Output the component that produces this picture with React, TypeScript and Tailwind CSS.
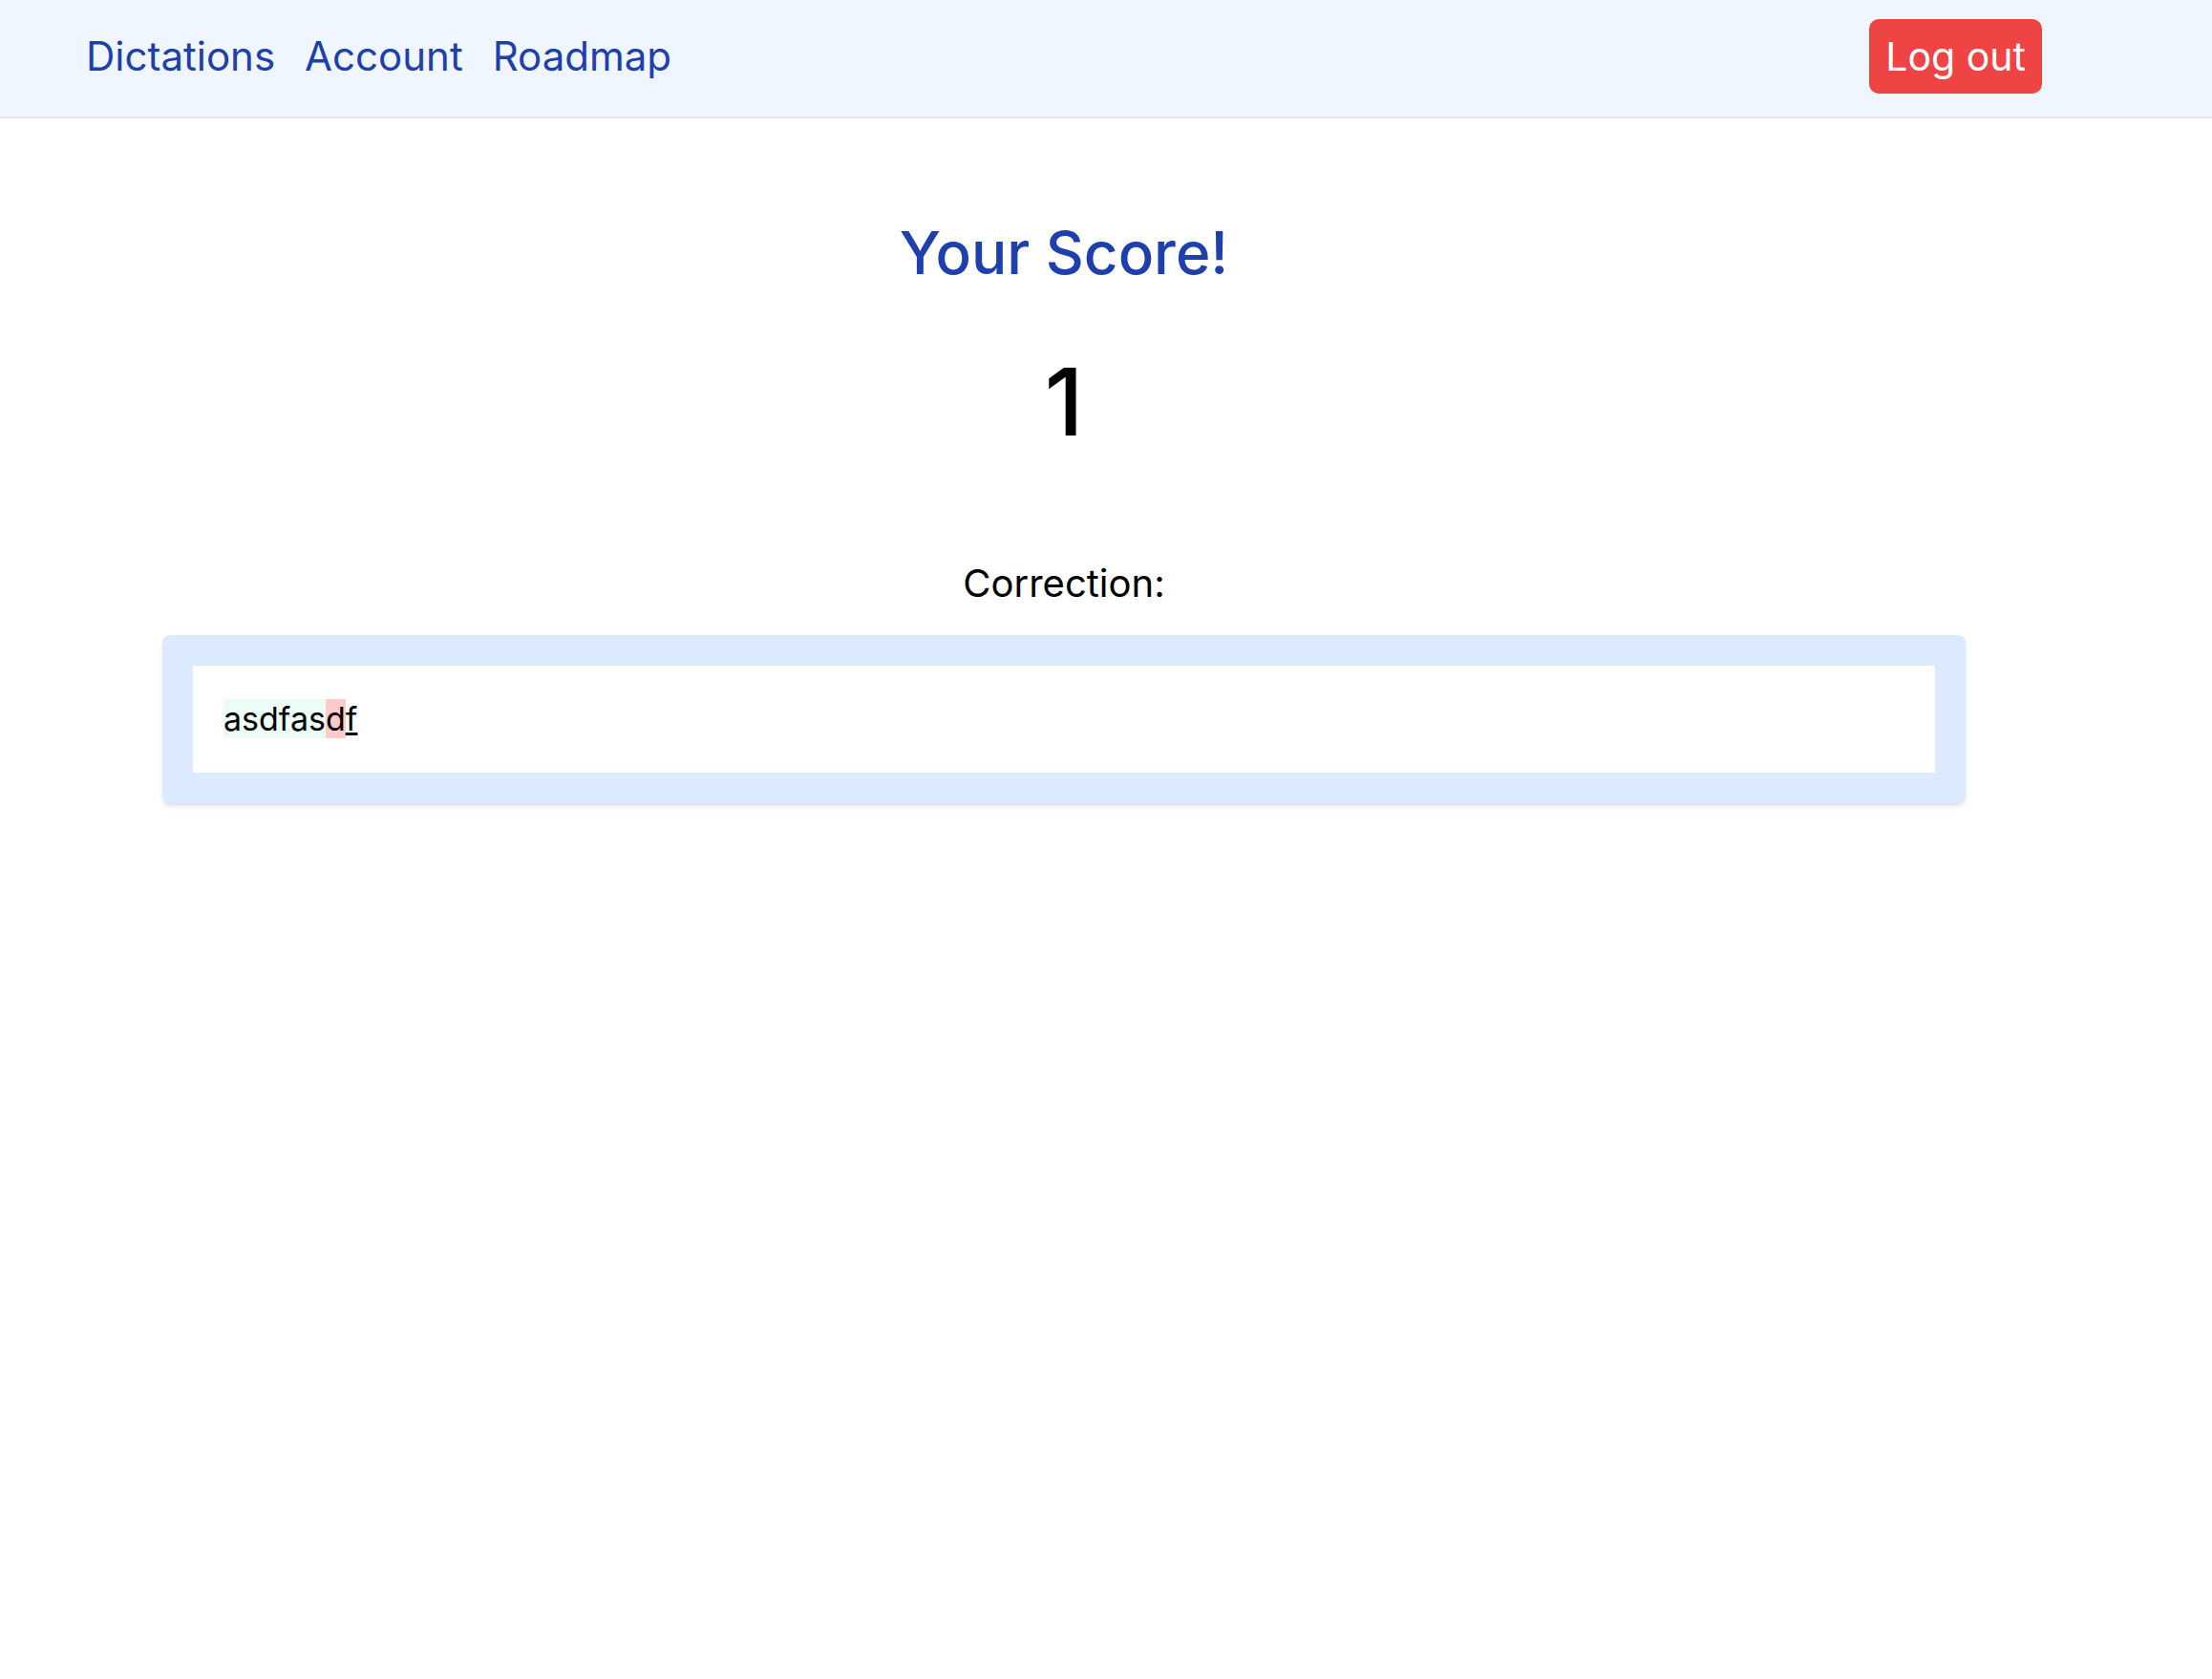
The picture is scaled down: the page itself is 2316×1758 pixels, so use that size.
export default function App() {
  return (
    <div className="min-h-screen bg-white font-['Inter',sans-serif] text-black">
      <header className="w-full bg-[#eff6ff] border-b-2 border-[#e5e7eb]">
        <div className="w-[2228px] h-[122px] px-[90px] pb-[4px] flex items-center justify-between">
          <nav className="flex items-center gap-[31px] text-[42px] leading-none text-[#1e40af]">
            <a href="#" className="hover:underline">Dictations</a>
            <a href="#" className="hover:underline">Account</a>
            <a href="#" className="hover:underline">Roadmap</a>
          </nav>
          <button className="h-[78px] px-[17px] rounded-[10px] bg-[#ef4444] text-white text-[41px] leading-none">
            Log out
          </button>
        </div>
      </header>

      <main className="w-[2228px] flex flex-col items-center">
        <h1 className="mt-[110px] text-[62px] leading-none font-medium text-[#1e40af]">Your Score!</h1>
        <div className="mt-[76px] text-[98px] leading-none font-medium">1</div>
        <h2 className="mt-[121px] text-[40px] leading-none">Correction:</h2>

        <div className="mt-[34px] w-[1888px] p-[32px] rounded-[8px] bg-[#dbeafe] shadow-md">
          <div className="bg-white px-[32px] py-[33px]">
            <p className="text-[34px] leading-[46px]">
              <span className="bg-[#ecfdf5]">asdfas</span>
              <span className="bg-[#fecaca]">d</span>
              <span className="underline">f</span>
            </p>
          </div>
        </div>
      </main>
    </div>
  );
}
